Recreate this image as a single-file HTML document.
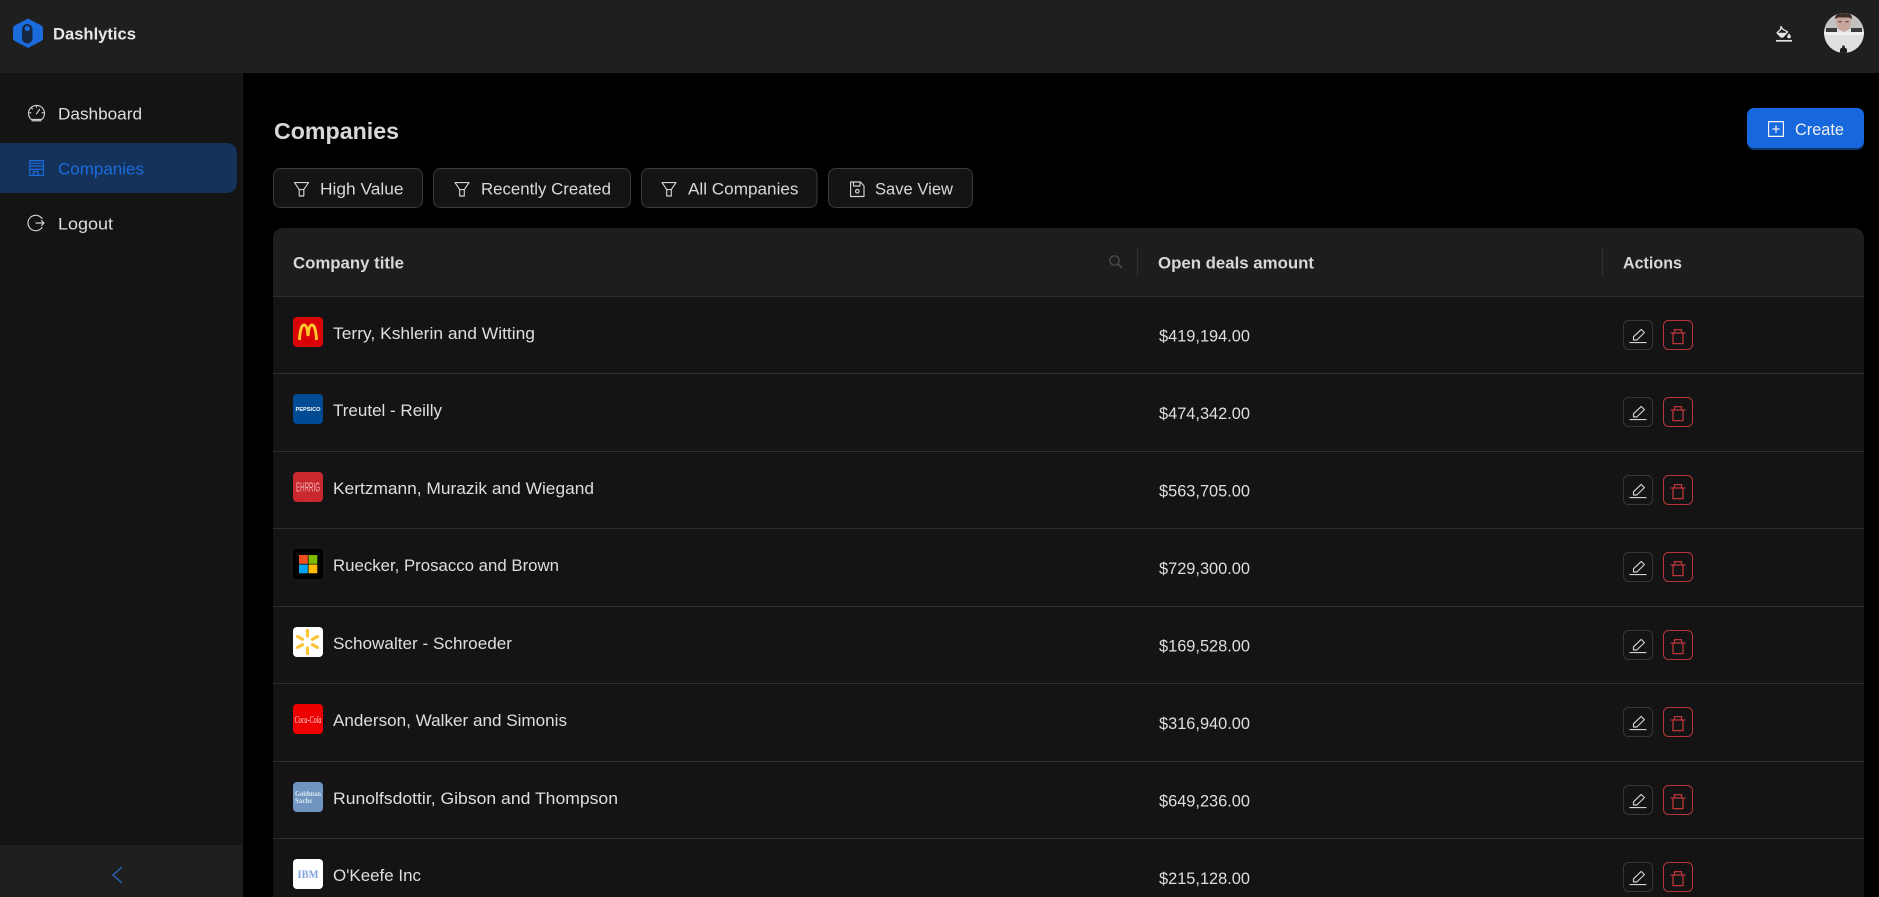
<!DOCTYPE html>
<html lang="en">
<head>
<meta charset="utf-8">
<title>Dashlytics - Companies</title>
<style>
html,body{margin:0;padding:0;background:#000;width:1879px;height:897px;overflow:hidden}
svg{display:block}
text{font-family:"Liberation Sans",sans-serif;font-size:16.8px;fill:#dedede}
.b{font-weight:700;fill:#d8d8d8;font-size:16.2px}
.i{fill:none;stroke:#d2d2d2;stroke-width:1.15;stroke-linecap:round;stroke-linejoin:round}
.f{font-size:16.8px;fill:#d8d8d8}
</style>
</head>
<body>
<svg xmlns="http://www.w3.org/2000/svg" width="1879" height="897" viewBox="0 0 1879 897">
<defs>
  <clipPath id="av"><circle cx="1844" cy="33" r="20"/></clipPath>
  <clipPath id="tb"><path d="M273 897V238a10 10 0 0 1 10-10H1854a10 10 0 0 1 10 10V897Z"/></clipPath>
  <g id="filter" class="i"><path d="M1 .6H15L10.300 7.600V14H5.700V7.600ZM5.700 7.600H10.300"/></g>
  <g id="edit">
    <rect x=".5" y=".5" width="29" height="29" rx="5" fill="#141414" stroke="#363636"/>
    <path class="i" d="M7 22.6H23M10.5 20V16.8L18.2 9.4 21.4 12.6 13.8 20Z"/>
  </g>
  <g id="del">
    <rect x=".5" y=".5" width="29" height="29" rx="5" fill="#141414" stroke="#b63639"/>
    <path d="M7.5 13H22.5M11.5 13V9.6H18.5V13M10 13V23.6H20V13" fill="none" stroke="#bb3639" stroke-width="1.300" stroke-linejoin="round"/>
  </g>
</defs>

<rect width="1879" height="897" fill="#000"/>

<!-- header -->
<rect width="1879" height="73" fill="#1f1f1f"/>
<path d="M28 18.5 41 25.2Q43 26.3 43 28.5V38Q43 40 41 41.1L28 48 15 41.1Q13 40 13 38V28.5Q13 26.3 15 25.2Z" fill="#1a6cdc"/>
<rect x="22" y="24" width="10.5" height="19.5" rx="5.2" fill="#16283f"/>
<circle cx="27.3" cy="28.5" r="2.6" fill="#1a6cdc"/>
<text x="53" y="39.5" class="b" style="fill:#e6e6e6" textLength="83" lengthAdjust="spacingAndGlyphs">Dashlytics</text>

<path d="M1776 40.800H1792" stroke="#e4e4e4" stroke-width="1.700"/>
<path d="M1781 26.500 1782.800 29.300 1787.600 31.800 1783 37H1781L1777 32.800 1780.600 29.500Z" fill="none" stroke="#e4e4e4" stroke-width="1.300" stroke-linejoin="round"/>
<path d="M1777.500 32.800H1787 L1783 37H1781Z" fill="#e4e4e4"/>
<path d="M1789 33.400C1790.400 35.200 1790.800 36 1790.800 36.600A1.800 1.800 0 0 1 1787.200 36.600C1787.200 36 1787.600 35.200 1789 33.400Z" fill="#e4e4e4"/>

<g clip-path="url(#av)">
  <rect x="1824" y="13" width="40" height="40" fill="#e0e0e0"/>
  <rect x="1824" y="13" width="40" height="16" fill="#c4c2c1"/>
  <rect x="1826" y="28" width="11" height="4" fill="#3a3a3a"/>
  <rect x="1851" y="28" width="11" height="4" fill="#3a3a3a"/>
  <rect x="1824" y="32" width="40" height="3" fill="#f0f0f0"/>
  <path d="M1836 14H1851L1851 22 1849.500 29 1844 32 1838 29 1836 22Z" fill="#c6a59b"/>
  <path d="M1835 19Q1835 13 1843 12 1852 12 1852 19L1849 17.500H1838Z" fill="#3b2c27"/>
  <rect x="1838.500" y="21" width="3" height="1.300" fill="#5d4b46"/>
  <rect x="1845.500" y="21" width="3" height="1.300" fill="#5d4b46"/>
  <path d="M1840 54V50Q1840 48 1842 48L1842.500 45.500H1844.500L1845 48Q1847 48 1847 50V54Z" fill="#1c1c1c"/>
</g>

<!-- sidebar -->
<rect y="73" width="243" height="772" fill="#141414"/>
<rect y="845" width="243" height="52" fill="#1f1f1f"/>
<rect x="242" y="73" width="1" height="772" fill="#1b1b1b"/>
<path d="M122 867 113 875 122 883" fill="none" stroke="#2766b8" stroke-width="1.400"/>

<path class="i" d="M31.300 119.500A8 8 0 1 1 41.700 119.500H31.300M32 120.800H41M36.500 113.800 39.600 109.400M36.500 106V107.300M29.600 112.800H30.900M42.100 112.800H43.400M31.600 108 32.500 108.900"/>
<text x="58" y="119.500" textLength="84" lengthAdjust="spacingAndGlyphs">Dashboard</text>

<rect x="-10" y="143" width="247" height="50" rx="10" fill="#15325b"/>
<path d="M29.800 160.600H43.400V175.400H29.800ZM29.800 166H43.400M29.800 169.400H43.400M33.500 175.400V171.500H38V175.400M31 163.300H42.200" fill="none" stroke="#1a6cdc" stroke-width="1.200"/>
<text x="58" y="174.500" textLength="86" lengthAdjust="spacingAndGlyphs" style="fill:#1a6cdc">Companies</text>

<path class="i" d="M42 218.600A7.700 7.700 0 1 0 42 227.400M36 223H44M41.500 220.500 44 223 41.500 225.500"/>
<text x="58" y="229.500" textLength="55" lengthAdjust="spacingAndGlyphs">Logout</text>

<!-- page title -->
<text x="274" y="139" textLength="125" lengthAdjust="spacingAndGlyphs" style="font-size:23.500px;font-weight:700;fill:#d8d8d8">Companies</text>

<rect x="1747" y="110" width="117" height="40" rx="7" fill="#0c3569"/>
<rect x="1747" y="108" width="117" height="40" rx="7" fill="#1668dc"/>
<path d="M1768.600 121.600H1783.400V136.400H1768.600ZM1776 125.300V132.700M1772.300 129H1779.700" fill="none" stroke="#f0f0f0" stroke-width="1.200"/>
<text x="1795" y="135" textLength="49" lengthAdjust="spacingAndGlyphs" style="fill:#f0f0f0">Create</text>

<!-- filter buttons -->
<g fill="#141414" stroke="#3c3c3c">
  <rect x="273.500" y="168.500" width="149" height="39" rx="7"/>
  <rect x="433.500" y="168.500" width="197" height="39" rx="7"/>
  <rect x="641.500" y="168.500" width="175.500" height="39" rx="7"/>
  <rect x="828.500" y="168.500" width="144" height="39" rx="7"/>
</g>
<use href="#filter" x="293.500" y="182"/>
<use href="#filter" x="454" y="182"/>
<use href="#filter" x="661" y="182"/>
<path class="i" d="M850.600 182H860.500L864 186V196.500H850.600ZM853.500 182V186H860V182"/>
<circle cx="857.300" cy="191.300" r="1.800" class="i"/>
<text x="320" y="194.500" class="f" textLength="83.500" lengthAdjust="spacingAndGlyphs">High Value</text>
<text x="481" y="194.500" class="f" textLength="130" lengthAdjust="spacingAndGlyphs">Recently Created</text>
<text x="688" y="194.500" class="f" textLength="110.500" lengthAdjust="spacingAndGlyphs">All Companies</text>
<text x="875" y="194.500" class="f" textLength="78" lengthAdjust="spacingAndGlyphs">Save View</text>

<!-- table -->
<g clip-path="url(#tb)">
  <rect x="273" y="228" width="1591" height="669" fill="#141414"/>
  <rect x="273" y="228" width="1591" height="68" fill="#1d1d1d"/>
  <g fill="#303030">
    <rect x="273" y="296" width="1591" height="1"/>
    <rect x="273" y="373" width="1591" height="1"/>
    <rect x="273" y="451" width="1591" height="1"/>
    <rect x="273" y="528" width="1591" height="1"/>
    <rect x="273" y="606" width="1591" height="1"/>
    <rect x="273" y="683" width="1591" height="1"/>
    <rect x="273" y="761" width="1591" height="1"/>
    <rect x="273" y="838" width="1591" height="1"/>
  </g>
</g>
<text x="293" y="268.500" class="b" textLength="111" lengthAdjust="spacingAndGlyphs">Company title</text>
<text x="1158" y="268.500" class="b" textLength="156" lengthAdjust="spacingAndGlyphs">Open deals amount</text>
<text x="1623" y="268.500" class="b" textLength="59" lengthAdjust="spacingAndGlyphs">Actions</text>
<circle cx="1114.500" cy="260.500" r="4.700" fill="none" stroke="#505050" stroke-width="1.200"/>
<path d="M1118 264 1122 268" stroke="#505050" stroke-width="1.400"/>
<rect x="1137" y="248" width="1" height="28" fill="#303030"/>
<rect x="1602" y="248" width="1" height="28" fill="#303030"/>

<!-- logos -->
<rect x="293" y="317" width="30" height="30" rx="4" fill="#d90007"/>
<path d="M299.500 340C300 329 302 325 304 325 306.500 325 307.500 330 308 336 308.500 330 309.500 325 312 325 314 325 316 329 316.500 340" fill="none" stroke="#ffc72c" stroke-width="2.900"/>

<rect x="293" y="394" width="30" height="30" rx="4" fill="#004b93"/>
<text x="295.500" y="411" textLength="25" lengthAdjust="spacingAndGlyphs" style="font-size:5.500px;font-weight:700;fill:#fff">PEPSICO</text>

<rect x="293" y="472" width="30" height="30" rx="4" fill="#c9282f"/>
<text x="296" y="491.500" textLength="24" lengthAdjust="spacingAndGlyphs" style="font-size:13px;fill:#eeb3b5">EHRRIG</text>

<rect x="293" y="549" width="30" height="30" rx="4" fill="#000"/>
<rect x="299" y="555" width="8.800" height="8.800" fill="#f25022"/>
<rect x="308.500" y="555" width="8.800" height="8.800" fill="#7fba00"/>
<rect x="299" y="564.500" width="8.800" height="8.800" fill="#00a4ef"/>
<rect x="308.500" y="564.500" width="8.800" height="8.800" fill="#ffb900"/>

<rect x="293" y="627" width="30" height="30" rx="4" fill="#fff"/>
<g stroke="#fbc53a" stroke-width="3.200" stroke-linecap="round">
  <path d="M307.500 630.500V636M307.500 648V653.500M297.500 636.500 302.500 639.300M312.500 644.700 317.500 647.500M297.500 647.500 302.500 644.700M312.500 639.300 317.500 636.500"/>
</g>

<rect x="293" y="704" width="30" height="30" rx="4" fill="#ee0000"/>
<text x="294.500" y="723" textLength="27" lengthAdjust="spacingAndGlyphs" style="font-size:10.500px;font-style:italic;fill:#fbdcdc;font-family:'Liberation Serif',serif">Coca-Cola</text>

<rect x="293" y="782" width="30" height="30" rx="4" fill="#6f95c0"/>
<text x="295" y="796" textLength="26" lengthAdjust="spacingAndGlyphs" style="font-size:7px;font-weight:700;fill:#dbe6f2;font-family:'Liberation Serif',serif">Goldman</text>
<text x="295" y="803" textLength="17" lengthAdjust="spacingAndGlyphs" style="font-size:7px;font-weight:700;fill:#dbe6f2;font-family:'Liberation Serif',serif">Sachs</text>

<rect x="293" y="859" width="30" height="30" rx="4" fill="#fff"/>
<text x="297.500" y="878" textLength="21" lengthAdjust="spacingAndGlyphs" style="font-size:11.500px;font-weight:700;fill:#7fa5de;font-family:'Liberation Serif',serif">IBM</text>

<!-- names -->
<text x="333" y="339" textLength="202" lengthAdjust="spacingAndGlyphs">Terry, Kshlerin and Witting</text>
<text x="333" y="416" textLength="109" lengthAdjust="spacingAndGlyphs">Treutel - Reilly</text>
<text x="333" y="494" textLength="261" lengthAdjust="spacingAndGlyphs">Kertzmann, Murazik and Wiegand</text>
<text x="333" y="571" textLength="226" lengthAdjust="spacingAndGlyphs">Ruecker, Prosacco and Brown</text>
<text x="333" y="649" textLength="179" lengthAdjust="spacingAndGlyphs">Schowalter - Schroeder</text>
<text x="333" y="726" textLength="234" lengthAdjust="spacingAndGlyphs">Anderson, Walker and Simonis</text>
<text x="333" y="804" textLength="285" lengthAdjust="spacingAndGlyphs">Runolfsdottir, Gibson and Thompson</text>
<text x="333" y="881" textLength="88" lengthAdjust="spacingAndGlyphs">O'Keefe Inc</text>

<!-- amounts -->
<text x="1159" y="341.500" textLength="91" lengthAdjust="spacingAndGlyphs">$419,194.00</text>
<text x="1159" y="419" textLength="91" lengthAdjust="spacingAndGlyphs">$474,342.00</text>
<text x="1159" y="496.500" textLength="91" lengthAdjust="spacingAndGlyphs">$563,705.00</text>
<text x="1159" y="574" textLength="91" lengthAdjust="spacingAndGlyphs">$729,300.00</text>
<text x="1159" y="651.500" textLength="91" lengthAdjust="spacingAndGlyphs">$169,528.00</text>
<text x="1159" y="729" textLength="91" lengthAdjust="spacingAndGlyphs">$316,940.00</text>
<text x="1159" y="806.500" textLength="91" lengthAdjust="spacingAndGlyphs">$649,236.00</text>
<text x="1159" y="884" textLength="91" lengthAdjust="spacingAndGlyphs">$215,128.00</text>

<!-- actions -->
<use href="#edit" x="1623" y="320"/><use href="#del" x="1663" y="320"/>
<use href="#edit" x="1623" y="397"/><use href="#del" x="1663" y="397"/>
<use href="#edit" x="1623" y="475"/><use href="#del" x="1663" y="475"/>
<use href="#edit" x="1623" y="552"/><use href="#del" x="1663" y="552"/>
<use href="#edit" x="1623" y="630"/><use href="#del" x="1663" y="630"/>
<use href="#edit" x="1623" y="707"/><use href="#del" x="1663" y="707"/>
<use href="#edit" x="1623" y="785"/><use href="#del" x="1663" y="785"/>
<use href="#edit" x="1623" y="862"/><use href="#del" x="1663" y="862"/>
</svg>
</body>
</html>
